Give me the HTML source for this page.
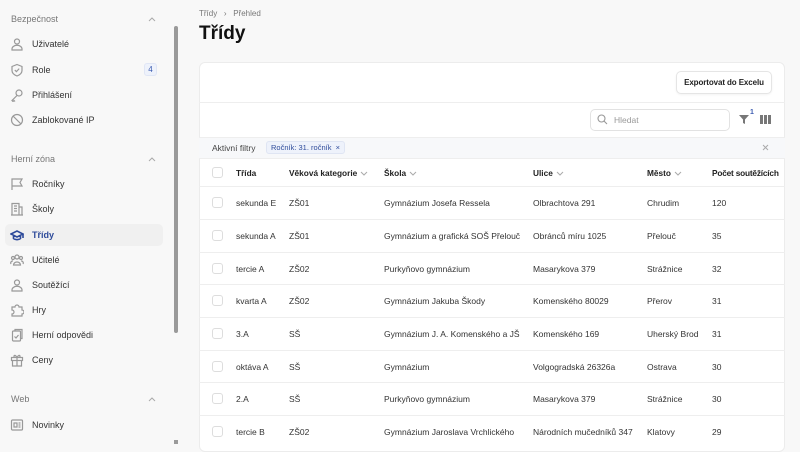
<!DOCTYPE html>
<html><head><meta charset="utf-8"><style>
*{box-sizing:border-box;margin:0;padding:0}
body{width:800px;height:444px;overflow:hidden;background:#f8f8f8;font-family:"Liberation Sans",sans-serif;color:#222;position:relative;font-size:9px}
.abs{position:absolute}
.sec{position:absolute;left:11px;color:#777;font-size:9px}
.chev{position:absolute;left:148px}
.it{position:absolute;left:32px;font-size:9px;color:#333}
.ic{position:absolute;left:10px;width:14px;height:14px}
.ic svg{width:14px;height:14px;fill:none;stroke:#999;stroke-width:1.2}
.card{position:absolute;left:199px;top:62px;width:586px;height:390px;background:#fff;border:1px solid #ececec;border-radius:6px}
.row{position:absolute;left:199px;width:586px;border-top:1px solid #eee;height:33px}
.row span{position:absolute;top:11px;font-size:8.5px;color:#333}
.cb{position:absolute;left:13px;top:10px;width:11px;height:11px;border:1px solid #ddd;border-radius:3px;background:#fff}
.h span{font-weight:bold;color:#222;top:9px;font-size:8.3px}
.dn{display:inline-block;vertical-align:middle;margin-left:3px}
</style></head><body>
<svg width="0" height="0" style="position:absolute"><defs><symbol id="up" viewBox="0 0 8 5"><path d="M1 4l3-3 3 3" fill="none" stroke="#aaa" stroke-width="1"/></symbol><symbol id="dw" viewBox="0 0 8 5"><path d="M1 1l3 3 3-3" fill="none" stroke="#aaa" stroke-width="1"/></symbol></defs></svg>
<div class="sec" style="top:14px">Bezpečnost</div><svg class="chev" style="top:17px" width="8" height="5"><use href="#up"/></svg>
<div class="ic" style="top:37px"><svg viewBox="0 0 14 14"><circle cx="7" cy="4.5" r="2.5"/><path d="M2 13v-1a4 3 0 0 1 10 0v1z"/></svg></div><div class="it" style="top:39px">Uživatelé</div>
<div class="ic" style="top:63px"><svg viewBox="0 0 14 14"><path d="M7 1.5l5 2v4c0 3-2.5 4.5-5 5.5-2.5-1-5-2.5-5-5.5v-4z"/><path d="M4.8 7l1.6 1.6 2.8-3"/></svg></div><div class="it" style="top:65px">Role</div>
<div class="abs" style="left:144px;top:63px;width:13px;height:13px;border-radius:3px;background:#eef2fb;color:#3b5bb0;font-size:8px;text-align:center;line-height:12px;border:1px solid #e0e6f5">4</div>
<div class="ic" style="top:88px"><svg viewBox="0 0 14 14"><circle cx="9" cy="5" r="3"/><path d="M7 7.5L2 12.5l1 1 1-1 1 1"/></svg></div><div class="it" style="top:90px">Přihlášení</div>
<div class="ic" style="top:113px"><svg viewBox="0 0 14 14"><circle cx="7" cy="7" r="5.5"/><path d="M3 3l8 8"/></svg></div><div class="it" style="top:115px">Zablokované IP</div>

<div class="sec" style="top:154px">Herní zóna</div><svg class="chev" style="top:157px" width="8" height="5"><use href="#up"/></svg>
<div class="ic" style="top:177px"><svg viewBox="0 0 14 14"><path d="M2 13V2h10l-2 3.5 2 3.5H2"/></svg></div><div class="it" style="top:179px">Ročníky</div>
<div class="ic" style="top:202px"><svg viewBox="0 0 14 14"><path d="M2 13V1.5h7V13M9 5h3v8M1 13h12M4 4h3M4 6.5h3M4 9h3"/></svg></div><div class="it" style="top:204px">Školy</div>
<div class="abs" style="left:5px;top:224px;width:158px;height:22px;background:#f0f0f0;border-radius:5px"></div>
<div class="ic" style="top:228px"><svg viewBox="0 0 14 14" style="stroke:#2d4a9a;stroke-width:1.6"><path d="M1 6l6-3 6 3-6 3zM3.5 7.3v3.2c2 1.6 5 1.6 7 0V7.3M13 6v4"/></svg></div><div class="it" style="top:230px;color:#2d4a9a;font-weight:bold">Třídy</div>
<div class="ic" style="top:253px"><svg viewBox="0 0 14 14"><circle cx="7" cy="4" r="2"/><circle cx="3" cy="5" r="1.5"/><circle cx="11" cy="5" r="1.5"/><path d="M3.5 12a3.5 3 0 0 1 7 0zM1 11a2 2 0 0 1 2-3M13 11a2 2 0 0 0-2-3"/></svg></div><div class="it" style="top:255px">Učitelé</div>
<div class="ic" style="top:278px"><svg viewBox="0 0 14 14"><circle cx="7" cy="4.5" r="2.5"/><path d="M2 13v-1a4 3 0 0 1 10 0v1z"/></svg></div><div class="it" style="top:280px">Soutěžící</div>
<div class="ic" style="top:303px"><svg viewBox="0 0 14 14"><path d="M2 4h3a2 2 0 0 1 4 0h3v3a2 2 0 0 1 0 4v2H2v-2a2 2 0 0 0 0-4z"/></svg></div><div class="it" style="top:305px">Hry</div>
<div class="ic" style="top:328px"><svg viewBox="0 0 14 14"><rect x="2.5" y="3" width="8" height="10" rx="1"/><path d="M5 3V1.5h7v9h-1.5M4.5 8.5l1.5 1.5 2.5-3"/></svg></div><div class="it" style="top:330px">Herní odpovědi</div>
<div class="ic" style="top:353px"><svg viewBox="0 0 14 14"><rect x="1.5" y="4.5" width="11" height="3"/><path d="M2.5 7.5V13h9V7.5M7 4.5V13M7 4.5C5 1 3 2.5 4.5 4.5M7 4.5C9 1 11 2.5 9.5 4.5"/></svg></div><div class="it" style="top:355px">Ceny</div>

<div class="sec" style="top:394px">Web</div><svg class="chev" style="top:397px" width="8" height="5"><use href="#up"/></svg>
<div class="ic" style="top:418px"><svg viewBox="0 0 14 14"><rect x="1.5" y="2" width="11" height="10" rx="1"/><path d="M4 5h3v4H4zM8.5 5h2M8.5 7h2M8.5 9h2"/></svg></div><div class="it" style="top:420px">Novinky</div>

<div class="abs" style="left:174px;top:26px;width:4px;height:307px;background:#9a9a9a;border-radius:2px"></div>
<div class="abs" style="left:174px;top:440px;width:4px;height:4px;background:#9a9a9a"></div>

<div class="abs" style="left:199px;top:9px;font-size:8px;color:#777">Třídy &nbsp;&nbsp;›&nbsp;&nbsp; Přehled</div>
<div class="abs" style="left:199px;top:23px;font-size:19px;font-weight:bold;color:#111">Třídy</div>

<div class="card"></div>
<div class="abs" style="left:676px;top:71px;width:96px;height:23px;border:1px solid #e5e5e5;border-radius:5px;background:#fff;font-size:8px;font-weight:bold;text-align:center;line-height:22px;box-shadow:0 1px 2px rgba(0,0,0,.05);letter-spacing:-0.1px">Exportovat do Excelu</div>
<div class="abs" style="left:199px;top:102px;width:586px;border-top:1px solid #eee"></div>
<div class="abs" style="left:590px;top:109px;width:140px;height:22px;border:1px solid #e2e2e2;border-radius:5px;background:#fff"></div>
<svg class="abs" style="left:597px;top:114px" width="11" height="11" viewBox="0 0 11 11" fill="none" stroke="#999" stroke-width="1.1"><circle cx="4.5" cy="4.5" r="3.5"/><path d="M7 7l3 3"/></svg>
<div class="abs" style="left:614px;top:115px;font-size:8.5px;color:#999">Hledat</div>
<svg class="abs" style="left:739px;top:114px" width="10" height="11" viewBox="0 0 10 11"><path d="M0 1h10L6 5.5V10L4 9V5.5z" fill="#777"/></svg>
<div class="abs" style="left:750px;top:109px;font-size:7px;color:#3b5bb0;font-weight:bold">1</div>
<svg class="abs" style="left:760px;top:115px" width="11" height="9"><rect x="0" width="3" height="9" fill="#777"/><rect x="4" width="3" height="9" fill="#777"/><rect x="8" width="3" height="9" fill="#777"/></svg>
<div class="abs" style="left:199px;top:137px;width:586px;height:21px;background:#f7f8fa;border-top:1px solid #eee"></div>
<div class="abs" style="left:212px;top:143px;font-size:8.5px;color:#444">Aktivní filtry</div>
<div class="abs" style="left:266px;top:141px;height:13px;padding:0 4px;border:1px solid #dfe5f3;border-radius:3px;background:#eef2fb;color:#2d4a9a;font-size:7.5px;line-height:12px">Ročník: 31. ročník &nbsp;×</div>
<svg class="abs" style="left:762px;top:144px" width="7" height="7" viewBox="0 0 7 7"><path d="M1 1l5 5M6 1L1 6" stroke="#aaa" stroke-width="1"/></svg>

<div class="row h" style="top:158px;height:28px"><div class="cb" style="top:8px"></div><span style="left:37px">Třída</span><span style="left:90px">Věková kategorie<svg class="dn" width="8" height="5"><use href="#dw"/></svg></span><span style="left:185px">Škola<svg class="dn" width="8" height="5"><use href="#dw"/></svg></span><span style="left:334px">Ulice<svg class="dn" width="8" height="5"><use href="#dw"/></svg></span><span style="left:448px">Město<svg class="dn" width="8" height="5"><use href="#dw"/></svg></span><span style="left:513px;letter-spacing:-0.2px">Počet soutěžících</span></div>

<div class="row" style="top:186px"><div class="cb"></div><span style="left:37px">sekunda E</span><span style="left:90px">ZŠ01</span><span style="left:185px">Gymnázium Josefa Ressela</span><span style="left:334px">Olbrachtova 291</span><span style="left:448px">Chrudim</span><span style="left:513px">120</span></div>
<div class="row" style="top:219px"><div class="cb"></div><span style="left:37px">sekunda A</span><span style="left:90px">ZŠ01</span><span style="left:185px">Gymnázium a grafická SOŠ Přelouč</span><span style="left:334px">Obránců míru 1025</span><span style="left:448px">Přelouč</span><span style="left:513px">35</span></div>
<div class="row" style="top:252px"><div class="cb"></div><span style="left:37px">tercie A</span><span style="left:90px">ZŠ02</span><span style="left:185px">Purkyňovo gymnázium</span><span style="left:334px">Masarykova 379</span><span style="left:448px">Strážnice</span><span style="left:513px">32</span></div>
<div class="row" style="top:284px"><div class="cb"></div><span style="left:37px">kvarta A</span><span style="left:90px">ZŠ02</span><span style="left:185px">Gymnázium Jakuba Škody</span><span style="left:334px">Komenského 80029</span><span style="left:448px">Přerov</span><span style="left:513px">31</span></div>
<div class="row" style="top:317px"><div class="cb"></div><span style="left:37px">3.A</span><span style="left:90px">SŠ</span><span style="left:185px">Gymnázium J. A. Komenského a JŠ</span><span style="left:334px">Komenského 169</span><span style="left:448px">Uherský Brod</span><span style="left:513px">31</span></div>
<div class="row" style="top:350px"><div class="cb"></div><span style="left:37px">oktáva A</span><span style="left:90px">SŠ</span><span style="left:185px">Gymnázium</span><span style="left:334px">Volgogradská 26326a</span><span style="left:448px">Ostrava</span><span style="left:513px">30</span></div>
<div class="row" style="top:382px"><div class="cb"></div><span style="left:37px">2.A</span><span style="left:90px">SŠ</span><span style="left:185px">Purkyňovo gymnázium</span><span style="left:334px">Masarykova 379</span><span style="left:448px">Strážnice</span><span style="left:513px">30</span></div>
<div class="row" style="top:415px"><div class="cb"></div><span style="left:37px">tercie B</span><span style="left:90px">ZŠ02</span><span style="left:185px">Gymnázium Jaroslava Vrchlického</span><span style="left:334px">Národních mučedníků 347</span><span style="left:448px">Klatovy</span><span style="left:513px">29</span></div>
</body></html>
